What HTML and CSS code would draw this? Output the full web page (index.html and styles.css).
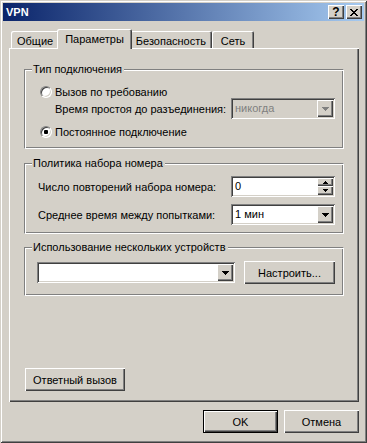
FILE: index.html
```html
<!DOCTYPE html>
<html lang="ru">
  <head>
    <meta charset="UTF-8" />
    <title>VPN</title>
    <link rel="stylesheet" href="styles.css">
  </head>
  <body>
    <div class="window">
      <div class="titlebar">
        <span class="title">VPN</span>
        <div class="caption-buttons">
          <button class="cap-btn">?</button>
          <button class="cap-btn">
            <svg width="8" height="7" viewBox="0 0 8 7"><path d="M0 0h2v1h-2zM6 0h2v1h-2zM1 1h2v1h-2zM5 1h2v1h-2zM2 2h4v1h-4zM3 3h2v1h-2zM2 4h4v1h-4zM1 5h2v1h-2zM5 5h2v1h-2zM0 6h2v1h-2zM6 6h2v1h-2z" fill="#000"/></svg>
          </button>
        </div>
      </div>

      <div class="dialog">
        <div class="tabs">
          <div class="tab">Общие</div>
          <div class="tab active">Параметры</div>
          <div class="tab">Безопасность</div>
          <div class="tab">Сеть</div>
        </div>

        <div class="panel">
          <!-- Connection type -->
          <div class="group group-type">
            <div class="legend">Тип подключения</div>
            <div class="radio-row"><span class="radio"></span>Вызов по требованию</div>
            <div class="field-row sub">
              <span>Время простоя до разъединения:</span>
              <div class="combo disabled">
                <span class="combo-value">никогда</span>
                <span class="drop"><svg width="7" height="4" viewBox="0 0 7 4"><path d="M0 0h7v1h-1v1h-1v1h-1v1h-1v-1h-1v-1h-1v-1h-1z" fill="#808080"/></svg></span>
              </div>
            </div>
            <div class="radio-row second"><span class="radio checked"></span>Постоянное подключение</div>
          </div>

          <!-- Redial policy -->
          <div class="group group-redial">
            <div class="legend">Политика набора номера</div>
            <div class="field-row">
              <span>Число повторений набора номера:</span>
              <div class="spin">
                <span class="combo-value">0</span>
                <span class="spin-buttons">
                  <span class="spin-btn up"><svg width="5" height="3" viewBox="0 0 5 3"><path d="M2 0h1v1h1v1h1v1h-5v-1h1v-1h1z" fill="#000"/></svg></span>
                  <span class="spin-btn down"><svg width="5" height="3" viewBox="0 0 5 3"><path d="M0 0h5v1h-1v1h-1v1h-1v-1h-1v-1h-1z" fill="#000"/></svg></span>
                </span>
              </div>
            </div>
            <div class="field-row next">
              <span>Среднее время между попытками:</span>
              <div class="combo">
                <span class="combo-value">1 мин</span>
                <span class="drop"><svg width="7" height="4" viewBox="0 0 7 4"><path d="M0 0h7v1h-1v1h-1v1h-1v1h-1v-1h-1v-1h-1v-1h-1z" fill="#000"/></svg></span>
              </div>
            </div>
          </div>

          <!-- Multiple devices -->
          <div class="group group-devices">
            <div class="legend">Использование нескольких устройств</div>
            <div class="device-row">
              <div class="combo wide">
                <span class="combo-value"></span>
                <span class="drop"><svg width="7" height="4" viewBox="0 0 7 4"><path d="M0 0h7v1h-1v1h-1v1h-1v1h-1v-1h-1v-1h-1v-1h-1z" fill="#000"/></svg></span>
              </div>
              <button class="btn btn-setup">Настроить...</button>
            </div>
          </div>

          <button class="btn btn-callback">Ответный вызов</button>
        </div>

        <div class="actions">
          <button class="btn default">OK</button>
          <button class="btn">Отмена</button>
        </div>
      </div>
    </div>
  </body>
</html>
```

FILE: styles.css
```css
* {
  box-sizing: border-box;
}

body {
  margin: 0;
  background-color: #d4d0c8;
  font-family: "Liberation Sans", Arial, sans-serif;
  font-size: 11px;
  color: #000000;
}

.window {
  width: 367px;
  height: 443px;
  padding: 3px;
  background-color: #d4d0c8;
  box-shadow: inset 1px 1px #d4d0c8, inset -1px -1px #404040,
    inset 2px 2px #ffffff, inset -2px -2px #808080;
  display: flex;
  flex-direction: column;
}

.titlebar {
  height: 18px;
  display: flex;
  align-items: center;
  justify-content: space-between;
  padding: 0 2px 0 3px;
  background: linear-gradient(to right, #0a246a, #a6caf0);
}

.title {
  color: #ffffff;
  font-weight: bold;
}

.caption-buttons {
  display: flex;
  gap: 2px;
}

.cap-btn {
  width: 16px;
  height: 14px;
  padding: 0;
  border: none;
  background-color: #d4d0c8;
  box-shadow: inset 1px 1px #ffffff, inset -1px -1px #404040,
    inset -2px -2px #808080;
  font-family: inherit;
  font-size: 12px;
  font-weight: bold;
  line-height: 12px;
  display: flex;
  align-items: center;
  justify-content: center;
}

.dialog {
  flex: 1;
  padding: 8px 0 0 6px;
  display: flex;
  flex-direction: column;
}

.tabs {
  display: flex;
  align-items: flex-end;
  height: 19px;
  padding-left: 2px;
}

.tab {
  min-width: 42px;
  height: 17px;
  padding: 2px 6px 0 6px;
  display: flex;
  align-items: center;
  justify-content: center;
  background-color: #d4d0c8;
  border-radius: 2px 2px 0 0;
  box-shadow: inset 1px 1px #ffffff, inset -1px 0 #404040,
    inset -2px 0 #808080;
}

.tab.active {
  height: 20px;
  margin: 0 -2px -1px;
  padding: 0 8px 1px;
  position: relative;
  z-index: 1;
}

.panel {
  width: 350px;
  height: 354px;
  padding: 21px 15px 0;
  display: flex;
  flex-direction: column;
  box-shadow: inset 1px 1px #ffffff, inset -1px -1px #404040,
    inset -2px -2px #808080;
}

.group {
  position: relative;
  width: 320px;
  border: 1px solid;
  border-color: #808080 #ffffff #ffffff #808080;
  box-shadow: inset 1px 1px #ffffff, inset -1px -1px #808080;
}

.legend {
  position: absolute;
  top: -7px;
  left: 7px;
  padding: 0 2px 0 1px;
  line-height: 13px;
  background-color: #d4d0c8;
}

.group-type {
  height: 80px;
  padding: 15px 8px 0 15px;
}

.group-redial {
  height: 71px;
  margin-top: 14px;
  padding: 12px 8px 0 13px;
}

.group-devices {
  height: 49px;
  margin-top: 13px;
  padding: 13px 8px 0 12px;
}

.radio-row {
  height: 13px;
  display: flex;
  align-items: center;
  gap: 3px;
}

.radio-row.second {
  margin-top: 6px;
}

.radio {
  width: 12px;
  height: 12px;
  border-radius: 50%;
  background-color: #ffffff;
  border: 1px solid;
  border-color: #808080 #ffffff #ffffff #808080;
  box-shadow: inset 1px 1px #404040, inset -1px -1px #d4d0c8;
  display: flex;
  align-items: center;
  justify-content: center;
}

.radio.checked::after {
  content: "";
  width: 4px;
  height: 4px;
  border-radius: 1px;
  background-color: #000000;
}

.field-row {
  height: 21px;
  display: flex;
  align-items: center;
  justify-content: space-between;
}

.field-row.sub {
  margin-left: 15px;
}

.field-row.next {
  margin-top: 7px;
}

.combo,
.spin {
  width: 104px;
  height: 21px;
  padding: 2px;
  display: flex;
  background-color: #ffffff;
  box-shadow: inset 1px 1px #808080, inset -1px -1px #ffffff,
    inset 2px 2px #404040, inset -2px -2px #d4d0c8;
}

.combo.disabled {
  background-color: #d4d0c8;
  color: #808080;
}

.combo.wide {
  width: 198px;
}

.combo-value {
  flex: 1;
  padding-left: 2px;
  line-height: 17px;
}

.drop {
  width: 16px;
  height: 17px;
  display: flex;
  align-items: center;
  justify-content: center;
  background-color: #d4d0c8;
  box-shadow: inset 1px 1px #ffffff, inset -1px -1px #404040,
    inset -2px -2px #808080;
}

.spin-buttons {
  width: 16px;
  display: flex;
  flex-direction: column;
}

.spin-btn {
  display: flex;
  align-items: center;
  justify-content: center;
  background-color: #d4d0c8;
  box-shadow: inset 1px 1px #ffffff, inset -1px -1px #404040,
    inset -2px -2px #808080;
}

.spin-btn.up {
  height: 8px;
}

.spin-btn.down {
  height: 9px;
}

.device-row {
  display: flex;
  align-items: center;
  justify-content: space-between;
}

.btn {
  width: 75px;
  height: 23px;
  padding: 0;
  border: none;
  background-color: #d4d0c8;
  font-family: inherit;
  font-size: 11px;
  color: #000000;
  box-shadow: inset 1px 1px #ffffff, inset -1px -1px #404040,
    inset -2px -2px #808080;
}

.btn.default {
  border: 1px solid #000000;
}

.btn-setup {
  width: 91px;
}

.btn-callback {
  width: 100px;
  margin: 72px 0 0 1px;
}

.actions {
  width: 350px;
  margin-top: 8px;
  display: flex;
  justify-content: flex-end;
  gap: 6px;
}
```
